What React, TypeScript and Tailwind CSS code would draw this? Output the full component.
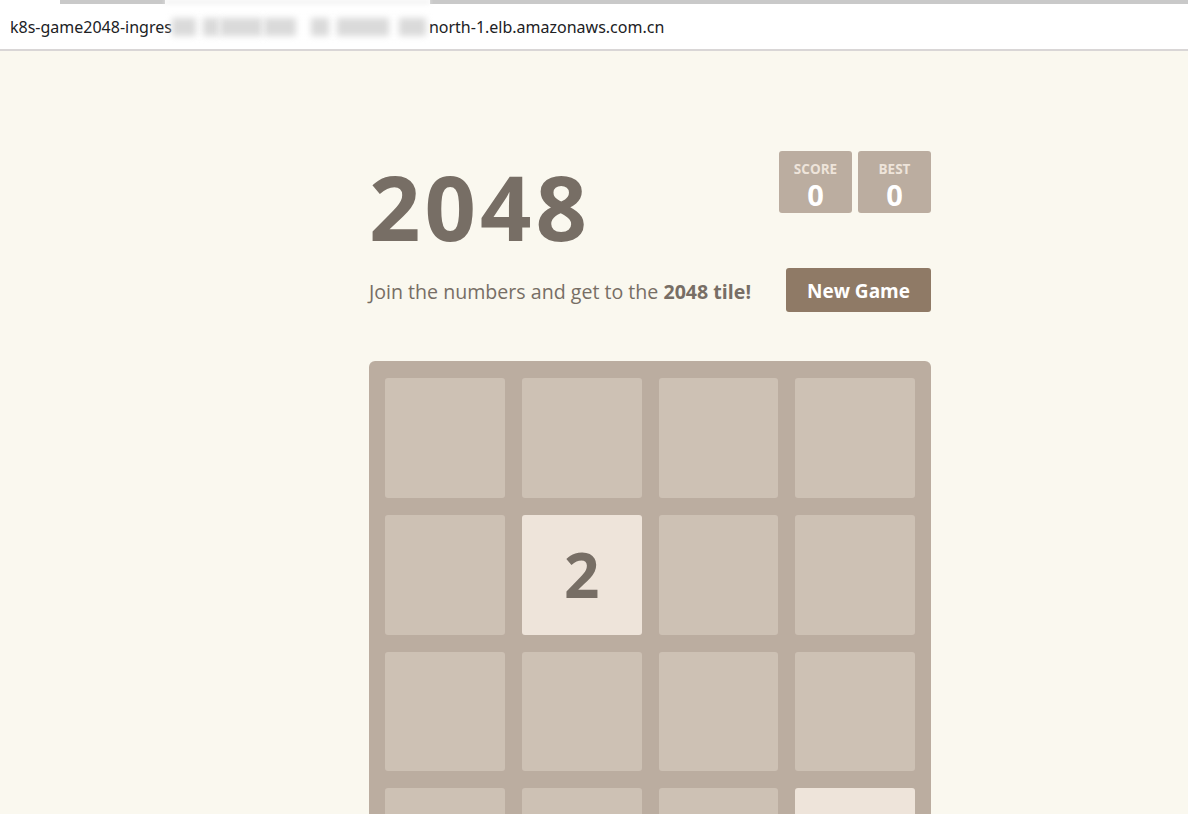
import React from "react";

const board = [
  [0, 0, 0, 0],
  [0, 2, 0, 0],
  [0, 0, 0, 0],
  [0, 0, 0, 2],
];

const blurBlocks = [
  { left: 176, width: 24 },
  { left: 207, width: 16 },
  { left: 224, width: 42 },
  { left: 268, width: 32 },
  { left: 315, width: 18 },
  { left: 341, width: 52 },
  { left: 403, width: 27 },
];

const ScoreBox = ({ label, value }: { label: string; value: number }) => (
  <div className="flex h-[62px] w-[73px] flex-col items-center rounded-[3px] bg-[#bbada0] pt-[12px]">
    <span className="text-[13.5px] leading-[13px] font-bold text-[#eee4da] uppercase">{label}</span>
    <span className="mt-[4px] text-[29px] leading-[29px] font-bold text-white">{value}</span>
  </div>
);

const Tile = ({ value }: { value: number }) => {
  if (!value) return <div className="aspect-square rounded-[3px] bg-[#cdc1b4]" />;
  return (
    <div className="flex aspect-square items-center justify-center rounded-[3px] bg-[#eee4da] text-[62px] font-bold text-[#776e65]">
      {value}
    </div>
  );
};

export default function App() {
  return (
    <div className="min-h-screen bg-[#faf8ef] font-['Open_Sans',sans-serif]">
      {/* browser address bar */}
      <div className="bg-white">
        <div className="flex h-[4px]">
          <div className="w-[60px] bg-white" />
          <div className="w-[105px] bg-[#c9c9c9]" />
          <div className="w-[265px] bg-[#f2f2f2] blur-[2px]" />
          <div className="flex-1 bg-[#c9c9c9]" />
        </div>
        <div className="flex h-[47px] items-center border-b-2 border-[#d9d6d6] pl-[10px] font-['Noto_Sans',sans-serif] text-[16px] text-[#202124]">
          <span>k8s-game2048-ingres</span>
          <span className="relative h-[18px] w-[257px]">
            {blurBlocks.map((b) => (
              <span
                key={b.left}
                className="absolute top-0 h-[18px] bg-[#dadada] blur-[3px]"
                style={{ left: b.left - 176, width: b.width }}
              />
            ))}
          </span>
          <span>north-1.elb.amazonaws.com.cn</span>
        </div>
      </div>

      <div className="ml-[369px] w-[562px] pt-[100px]">
        <div className="flex items-start justify-between">
          <h1 className="mt-[10px] text-[90px] leading-[90px] font-bold tracking-[4px] text-[#776e65]">2048</h1>
          <div className="flex gap-[6px]">
            <ScoreBox label="Score" value={0} />
            <ScoreBox label="Best" value={0} />
          </div>
        </div>

        <div className="mt-[17px] flex h-[44px] items-center justify-between">
          <p className="pt-[3px] text-[19.6px] text-[#776e65]">
            Join the numbers and get to the <strong>2048 tile!</strong>
          </p>
          <button className="h-[44px] w-[145px] rounded-[3px] bg-[#8f7a66] pt-[2px] text-[19px] font-bold text-white">
            New Game
          </button>
        </div>

        <div className="mt-[49px] grid grid-cols-4 gap-[17px] rounded-[6px] bg-[#bbada0] p-[16px] pt-[17px]">
          {board.flat().map((v, i) => (
            <Tile key={i} value={v} />
          ))}
        </div>
      </div>
    </div>
  );
}
